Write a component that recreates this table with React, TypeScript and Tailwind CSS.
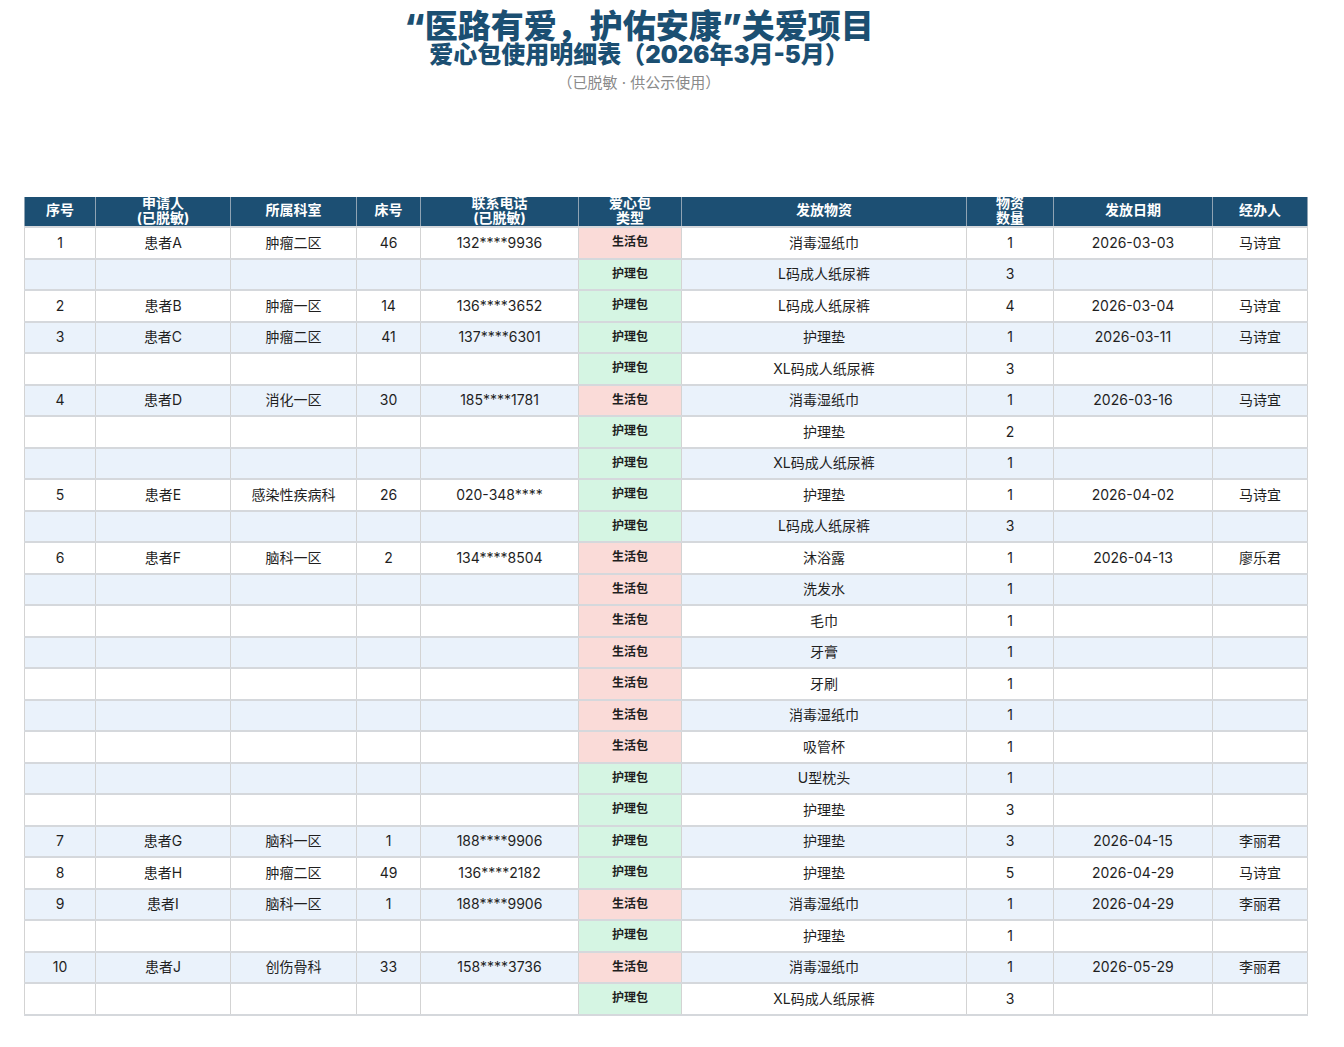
import React from "react";

type Row = {
  no?: string;
  name?: string;
  dept?: string;
  bed?: string;
  phone?: string;
  kind: "生活包" | "护理包";
  item: string;
  qty: string;
  date?: string;
  handler?: string;
};

const rows: Row[] = [
  { no: "1", name: "患者A", dept: "肿瘤二区", bed: "46", phone: "132****9936", kind: "生活包", item: "消毒湿纸巾", qty: "1", date: "2026-03-03", handler: "马诗宜" },
  { kind: "护理包", item: "L码成人纸尿裤", qty: "3" },
  { no: "2", name: "患者B", dept: "肿瘤一区", bed: "14", phone: "136****3652", kind: "护理包", item: "L码成人纸尿裤", qty: "4", date: "2026-03-04", handler: "马诗宜" },
  { no: "3", name: "患者C", dept: "肿瘤二区", bed: "41", phone: "137****6301", kind: "护理包", item: "护理垫", qty: "1", date: "2026-03-11", handler: "马诗宜" },
  { kind: "护理包", item: "XL码成人纸尿裤", qty: "3" },
  { no: "4", name: "患者D", dept: "消化一区", bed: "30", phone: "185****1781", kind: "生活包", item: "消毒湿纸巾", qty: "1", date: "2026-03-16", handler: "马诗宜" },
  { kind: "护理包", item: "护理垫", qty: "2" },
  { kind: "护理包", item: "XL码成人纸尿裤", qty: "1" },
  { no: "5", name: "患者E", dept: "感染性疾病科", bed: "26", phone: "020-348****", kind: "护理包", item: "护理垫", qty: "1", date: "2026-04-02", handler: "马诗宜" },
  { kind: "护理包", item: "L码成人纸尿裤", qty: "3" },
  { no: "6", name: "患者F", dept: "脑科一区", bed: "2", phone: "134****8504", kind: "生活包", item: "沐浴露", qty: "1", date: "2026-04-13", handler: "廖乐君" },
  { kind: "生活包", item: "洗发水", qty: "1" },
  { kind: "生活包", item: "毛巾", qty: "1" },
  { kind: "生活包", item: "牙膏", qty: "1" },
  { kind: "生活包", item: "牙刷", qty: "1" },
  { kind: "生活包", item: "消毒湿纸巾", qty: "1" },
  { kind: "生活包", item: "吸管杯", qty: "1" },
  { kind: "护理包", item: "U型枕头", qty: "1" },
  { kind: "护理包", item: "护理垫", qty: "3" },
  { no: "7", name: "患者G", dept: "脑科一区", bed: "1", phone: "188****9906", kind: "护理包", item: "护理垫", qty: "3", date: "2026-04-15", handler: "李丽君" },
  { no: "8", name: "患者H", dept: "肿瘤二区", bed: "49", phone: "136****2182", kind: "护理包", item: "护理垫", qty: "5", date: "2026-04-29", handler: "马诗宜" },
  { no: "9", name: "患者I", dept: "脑科一区", bed: "1", phone: "188****9906", kind: "生活包", item: "消毒湿纸巾", qty: "1", date: "2026-04-29", handler: "李丽君" },
  { kind: "护理包", item: "护理垫", qty: "1" },
  { no: "10", name: "患者J", dept: "创伤骨科", bed: "33", phone: "158****3736", kind: "生活包", item: "消毒湿纸巾", qty: "1", date: "2026-05-29", handler: "李丽君" },
  { kind: "护理包", item: "XL码成人纸尿裤", qty: "3" },
];

const headers: { label: React.ReactNode; width: string }[] = [
  { label: "序号", width: "w-[71px]" },
  { label: <>申请人<br />(已脱敏)</>, width: "w-[135px]" },
  { label: "所属科室", width: "w-[126px]" },
  { label: "床号", width: "w-[64px]" },
  { label: <>联系电话<br />(已脱敏)</>, width: "w-[158px]" },
  { label: <>爱心包<br />类型</>, width: "w-[103px]" },
  { label: "发放物资", width: "w-[285px]" },
  { label: <>物资<br />数量</>, width: "w-[87px]" },
  { label: "发放日期", width: "w-[159px]" },
  { label: "经办人", width: "w-[95px]" },
];

const cell = "border-x border-b-2 border-x-[#d3d3d3] border-b-[#d5d8dc] text-center align-middle p-0 pb-[1px]";

export default function App() {
  return (
    <div className="min-h-screen bg-white font-['Inter','Noto_Sans_CJK_SC',sans-serif] text-[#1f1f1f]">
      <div className="flex flex-col items-center pt-[8px] pr-[66px]">
        <h1 className="text-[33px] leading-[36px] font-black text-[#1b4f72]">“医路有爱，护佑安康”关爱项目</h1>
        <h2 className="text-[24px] leading-[22px] font-black text-[#1b4f72]">爱心包使用明细表（2026年3月-5月）</h2>
        <p className="mt-[7px] text-[15px] leading-5 text-[#8a8a8a]">（已脱敏 · 供公示使用）</p>
      </div>

      <div className="mt-[104px] ml-[24px] w-[1283px] bg-white relative">
        <table className="w-full table-fixed border-collapse text-[14px]">
          <thead>
            <tr className="bg-[#1c4f73]">
              {headers.map((h, i) => (
                <th
                  key={i}
                  className={`${h.width} border-x border-x-[#8fa3b3] border-b-2 border-b-[#d5d8dc] p-0 text-center align-middle font-bold text-white`}
                >
                  <div className="h-[29px] flex items-center justify-center">
                    <div className="text-[14px] leading-[15px] -translate-y-[2px]">{h.label}</div>
                  </div>
                </th>
              ))}
            </tr>
          </thead>
          <tbody>
            {rows.map((r, i) => (
              <tr key={i} className={`h-[31.5px] ${i % 2 === 1 ? "bg-[#eaf2fb]" : "bg-white"}`}>
                <td className={cell}>{r.no}</td>
                <td className={cell}>{r.name}</td>
                <td className={cell}>{r.dept}</td>
                <td className={cell}>{r.bed}</td>
                <td className={cell}>{r.phone}</td>
                <td className={`${cell} text-[12px] font-bold ${r.kind === "生活包" ? "bg-[#fadbd8]" : "bg-[#d5f5e3]"}`}>{r.kind}</td>
                <td className={cell}>{r.item}</td>
                <td className={cell}>{r.qty}</td>
                <td className={cell}>{r.date}</td>
                <td className={cell}>{r.handler}</td>
              </tr>
            ))}
          </tbody>
        </table>
      </div>
    </div>
  );
}
